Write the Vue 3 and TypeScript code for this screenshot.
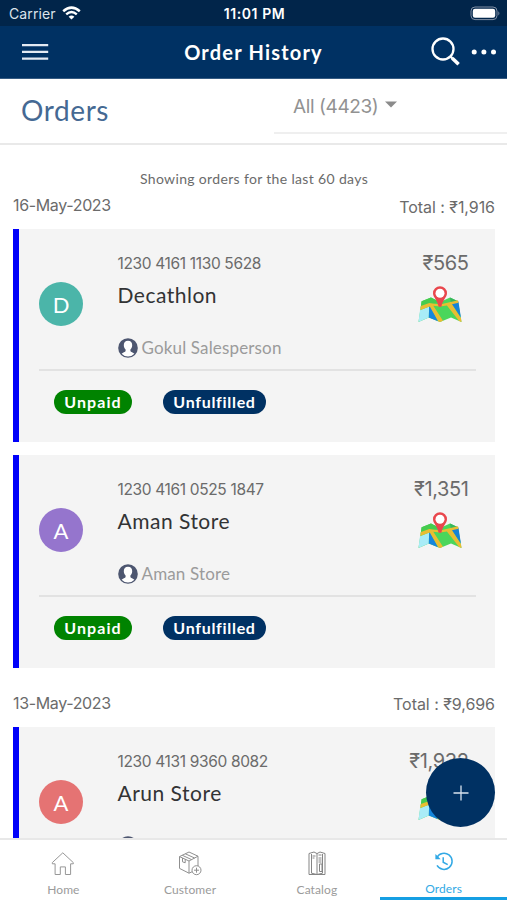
<script setup lang="ts">
interface Badge {
  label: string
  kind: 'paid' | 'filled'
}

interface Order {
  id: string
  store: string
  seller: string
  amount: string
  tone: 'teal' | 'violet' | 'coral'
  badges: Badge[]
}

interface OrderDay {
  date: string
  total: string
  orders: Order[]
}

const open: Badge[] = [
  { label: 'Unpaid', kind: 'paid' },
  { label: 'Unfulfilled', kind: 'filled' },
]

const days: OrderDay[] = [
  {
    date: '16-May-2023',
    total: '₹1,916',
    orders: [
      { id: '1230 4161 1130 5628', store: 'Decathlon', seller: 'Gokul Salesperson', amount: '₹565', tone: 'teal', badges: open },
      { id: '1230 4161 0525 1847', store: 'Aman Store', seller: 'Aman Store', amount: '₹1,351', tone: 'violet', badges: open },
    ],
  },
  {
    date: '13-May-2023',
    total: '₹9,696',
    orders: [
      { id: '1230 4131 9360 8082', store: 'Arun Store', seller: '', amount: '₹1,932', tone: 'coral', badges: [] },
    ],
  },
]
</script>

<template>
  <div class="screen">
    <div class="status">
      <div class="carrier">
        <span>Carrier</span>
        <svg width="19" height="14" viewBox="0 0 19 14" fill="none" stroke="#fff">
          <path d="M1.2 5.3Q9.5-2 17.8 5.3" stroke-width="2.5" />
          <path d="M4.2 8.4Q9.5 3.7 14.8 8.4" stroke-width="2.4" />
          <path d="M9.5 13.6 6.6 10.7Q9.5 8.2 12.4 10.7Z" fill="#fff" stroke="none" />
        </svg>
      </div>
      <span class="clock">11:01 PM</span>
      <svg class="battery" width="31" height="15" viewBox="0 0 31 15">
        <rect x="1" y="1" width="26" height="12.6" rx="4" fill="none" stroke="#8190a5" />
        <rect x="2.8" y="2.8" width="22.4" height="9" rx="2.2" fill="#fff" />
        <path d="M28.4 5.2q2 2.1 0 4.2z" fill="#8190a5" />
      </svg>
    </div>

    <header class="bar">
      <svg class="menu" width="27" height="18" viewBox="0 0 27 18" stroke="#e3eaf3" stroke-width="2.2">
        <path d="M0 2.1h26.2M0 8.9h26.2M0 15.6h26.2" />
      </svg>
      <h1>Order History</h1>
      <div class="tools">
        <svg width="30" height="30" viewBox="0 0 30 30" fill="none" stroke="#fff">
          <circle cx="12" cy="12" r="10.5" stroke-width="2.3" />
          <path d="m19.6 19.6 2 2" stroke-width="2.2" />
          <path d="m21.3 21.3 6.3 6" stroke-width="3.6" />
        </svg>
        <svg width="26" height="6" viewBox="0 0 26 6" fill="#fff">
          <circle cx="3.2" cy="3" r="2.5" /><circle cx="12.9" cy="3" r="2.5" /><circle cx="22.5" cy="3" r="2.5" />
        </svg>
      </div>
    </header>

    <div class="filter">
      <h2>Orders</h2>
      <div class="select">
        <span>All (4423)</span>
        <svg width="12" height="7" viewBox="0 0 12 7"><path d="M0 .4h12L6 6.6z" fill="#8b8b8b" /></svg>
      </div>
    </div>

    <main class="list">
      <p class="note">Showing orders for the last 60 days</p>
      <section v-for="day in days" :key="day.date" class="day">
        <div class="day-head">
          <span class="date">{{ day.date }}</span>
          <span class="total">Total : {{ day.total }}</span>
        </div>
        <article v-for="order in day.orders" :key="order.id" class="card">
          <div class="summary">
            <div class="avatar" :class="order.tone">{{ order.store[0] }}</div>
            <div class="info">
              <div class="id">{{ order.id }}</div>
              <div class="store">{{ order.store }}</div>
              <div class="seller">
                <svg width="20" height="20" viewBox="0 0 20 20">
                  <circle cx="10" cy="10" r="9.8" fill="#4d5670" />
                  <path d="M10 2.7c2.8 0 4.3 1.9 4.2 4.5-.1 2-.8 3.3-1.8 4.3v1.4c.2 1.3 2.9 1.3 4 2.9A8.6 8.6 0 0 1 10 18.6a8.6 8.6 0 0 1-6.4-2.8c1.1-1.6 3.8-1.6 4-2.9v-1.4c-1-1-1.7-2.3-1.8-4.3-.1-2.6 1.4-4.5 4.2-4.5z" fill="#fff" />
                </svg>
                <span v-if="order.seller">{{ order.seller }}</span>
              </div>
            </div>
            <div class="side">
              <div class="amount">{{ order.amount }}</div>
              <svg class="map" width="44" height="38" viewBox="0 0 44 38">
                <path d="M3.6 16.2 13 12.5 22 17l10-4.5 8 3.7L43.5 37 33 32.4 22 37l-11.2-4.6L.5 37z" fill="#4bd65b" />
                <path d="m3.6 16.2 9.4-3.7 8.4 4.2-10 3.6L2.7 23z" fill="#45cc4e" />
                <path d="m2 25.2 9.2-3.8-.4 11L.5 37z" fill="#a9ecf7" />
                <path d="m11.2 21.5 1.3-.2L20 36.2l-9.2-3.8z" fill="#1586dc" />
                <path d="m32.8 18 7.6-1.6 2.5 16z" fill="#1683d5" />
                <path d="m32 12.5 8 3.7-7 2z" fill="#36b55c" />
                <path d="M2.9 21.1 11.3 18 22 19.4l18-4.2.5 2.6-6.5 1.5 9 14 .5 3.7-2.4-1-12.2-15.4-6.9 1-6.7-.8L25 35.7 22 37l-1.8-.8L11.8 21.4l-9.6 3.7z" fill="#e9bd32" />
                <path d="M22 1.2a7 7 0 0 1 7 7c0 4.2-4.6 6.8-5.6 13.6h-2.8C19.6 15 15 12.4 15 8.2a7 7 0 0 1 7-7z" fill="#e9474d" />
                <circle cx="22" cy="8.2" r="4.5" fill="#fff" />
              </svg>
            </div>
          </div>
          <div v-if="order.badges.length" class="badges">
            <span v-for="badge in order.badges" :key="badge.label" class="badge" :class="badge.kind">{{ badge.label }}</span>
          </div>
        </article>
      </section>
    </main>

    <button class="fab" aria-label="+">
      <svg width="16" height="16" viewBox="0 0 16 16" stroke="#d8e2ee" stroke-width="1.3"><path d="M8 .5v15M.5 8h15" /></svg>
    </button>

    <nav class="tabs">
      <div class="tab">
        <svg width="24" height="26" viewBox="0 0 24 26" fill="none" stroke="#979797" stroke-width="1">
          <path d="m1.3 11.6 10.5-9.8 10.5 9.8v1.2h-2.7v10.7h-5.2v-7.6H9.3v7.6H4.1V12.800H1.3z" />
        </svg>
        <span>Home</span>
      </div>
      <div class="tab">
        <svg width="24" height="26" viewBox="0 0 24 26" fill="none" stroke="#8f8f8f" stroke-width="1">
          <path d="M1.5 5.6 11 1l9 4.2v10.3M1.500 5.600v11.800l9.500 4.800 3.200-1.500M1.500 5.600 11 10l9-4.800M11 10v12.200M4.300 4.300l9.300 4.300M7.300 2.800l9.300 4.200M4.500 7v3.800l2.700 1V8.200" />
          <circle cx="18.500" cy="19.200" r="4.500" fill="#fff" /><path d="M18.500 16.700v5M16 19.200h5" />
        </svg>
        <span>Customer</span>
      </div>
      <div class="tab">
        <svg width="24" height="26" viewBox="0 0 24 26" fill="none" stroke="#858585" stroke-width="1">
          <path d="M4 2.500 9 1l3 1.600L15 1l5 1.500v21H4zM12 2.600v20.900M6.500 3v19.200l5.500 1.300 5.500-1.300V3M7.500 5h3M7.500 7h2M13.500 4h3M13.500 7h3M13.500 9h3M13.500 11h3M14.500 13h2.500v7.500h-2.500z" />
        </svg>
        <span>Catalog</span>
      </div>
      <div class="tab active">
        <svg width="20" height="22" viewBox="0 0 20 22" fill="none" stroke="#32a9e5" stroke-width="1.5">
          <path d="M2.8 6.6A8.1 8.1 0 1 1 3 14.400" /><path d="M1.4 3v5.200h5.300z" fill="#32a9e5" stroke="none" />
          <path d="M9.200 6.200v5l4.500 2.500" />
        </svg>
        <span>Orders</span>
      </div>
    </nav>
  </div>
</template>

<style>
body {
  background: #fff;
}
</style>

<style scoped>
.screen {
  display: flex;
  flex-direction: column;
  position: relative;
  width: 507px;
  height: 900px;
  overflow: hidden;
  background: #fff;
  color: #6b6b6b;
  font-family: Lato, 'Noto Sans', sans-serif;
}
h1, h2, p { margin: 0; font-weight: 400; }
svg { display: block; flex: none; }
.status {
  display: grid;
  grid-template-columns: 1fr auto 1fr;
  align-items: center;
  flex: none;
  height: 26px;
  padding: 1px 6px 0 9px;
  box-sizing: border-box;
  background: #01254a;
  color: #fff;
  font: 14px/16px Inter, sans-serif;
}
.carrier { display: flex; align-items: center; gap: 6px; color: #dce3eb; letter-spacing: 0.1px; }
.carrier svg { margin-top: -1px; }
.clock { font-size: 14px; font-weight: 600; letter-spacing: 0.6px; margin-right: 1px; }
.battery { justify-self: end; }
.bar {
  display: grid;
  grid-template-columns: minmax(0, 1fr) auto minmax(0, 1fr);
  align-items: center;
  flex: none;
  height: 53px;
  box-sizing: border-box;
  background: #003163;
  border-bottom: 1px solid #355b83;
}
.menu { margin-left: 22px; }
.bar h1 { color: #fff; font-size: 20px; line-height: 24px; font-weight: 700; letter-spacing: 1.2px; }
.tools { display: flex; justify-self: end; align-items: center; gap: 10px; margin-right: 10px; }
.filter {
  display: flex;
  justify-content: space-between;
  flex: none;
  height: 66px;
  box-sizing: border-box;
  border-bottom: 2px solid #e9e9e9;
}
.filter h2 { padding: 14px 0 0 21px; color: #456993; font-size: 28px; line-height: 34px; letter-spacing: 0.6px; }
.select {
  display: flex;
  gap: 7px;
  width: 233px;
  height: 55px;
  box-sizing: border-box;
  padding: 16px 0 0 19px;
  border-bottom: 2px solid #efefef;
  color: #929292;
  font-family: Inter, sans-serif;
  font-size: 19px;
  line-height: 24px;
  letter-spacing: -0.4px;
}
.select svg { margin-top: 6px; }
.list { flex: 1; min-height: 0; overflow: hidden; padding: 0 12px 0 13px; }
.note { padding-top: 24px; text-align: center; font-size: 14px; line-height: 20px; letter-spacing: 0.34px; }
.day-head {
  display: flex;
  justify-content: space-between;
  height: 40px;
  font-family: Inter, sans-serif;
  font-size: 16px;
  line-height: 32px;
  letter-spacing: -0.35px;
}
.total { padding-top: 2px; letter-spacing: -0.05px; }
.day + .day .day-head { height: 47px; line-height: 46px; }
.day + .day .total { padding-top: 1px; }
.card {
  height: 213px;
  margin-bottom: 12.5px;
  box-sizing: border-box;
  border-left: 6.5px solid #0000fa;
  background: #f4f4f4;
}
.summary {
  display: flex;
  height: 142px;
  margin: 0 19px 0 20px;
  box-sizing: border-box;
  border-bottom: 2px solid #e2e2e2;
}
.avatar {
  width: 44px;
  height: 44px;
  margin-top: 53px;
  border-radius: 50%;
  color: #fff;
  font-size: 22px;
  line-height: 46px;
  text-align: center;
}
.teal { background: #4bb5a9; }
.violet { background: #9575cd; }
.coral { background: #e57373; }
.info { flex: 1; padding: 24px 0 0 34.500px; }
.id { font-family: Inter, sans-serif; font-size: 15.5px; line-height: 22px; letter-spacing: -0.35px; }
.store { margin-top: 6px; color: #323334; font-size: 21px; line-height: 28px; letter-spacing: 0.5px; }
.seller { display: flex; align-items: center; gap: 4px; height: 22px; margin-top: 28px; color: #9b9b9b; font-size: 17px; line-height: 22px; letter-spacing: 0.15px; }
.side { display: flex; flex-direction: column; align-items: flex-end; padding: 20px 7px 0 0; }
.amount { margin-right: 0.500px; font-family: Inter, sans-serif; font-size: 20px; line-height: 28px; letter-spacing: -0.4px; }
.map { margin: 8px 7px 0 0; }
.badges { display: flex; gap: 31px; padding: 19px 0 0 35px; }
.badge {
  height: 24px;
  border-radius: 12px;
  color: #fff;
  font-size: 16px;
  line-height: 24px;
  font-weight: 700;
  text-align: center;
}
.paid { width: 78px; background: #008300; letter-spacing: 1.1px; }
.filled { width: 103px; background: #003163; letter-spacing: 0.7px; }
.fab {
  display: flex;
  align-items: center;
  justify-content: center;
  position: absolute;
  right: 12px;
  bottom: 73px;
  width: 69px;
  height: 69px;
  padding: 0;
  border: 0;
  border-radius: 50%;
  background: #003163;
}
.tabs {
  display: grid;
  grid-template-columns: repeat(4, 1fr);
  flex: none;
  height: 62px;
  box-sizing: border-box;
  border-top: 2px solid #e8e8e8;
  background: #fff;
}
.tab {
  display: flex;
  flex-direction: column;
  align-items: center;
  padding-top: 11px;
  color: #9b9b9b;
  font-size: 12px;
  line-height: 16px;
  letter-spacing: 0.1px;
}
.tab span { margin-top: 5px; }
.active { border-bottom: 3px solid #159fe3; color: #32a9e5; }
.active span { margin-top: 8px; }
</style>
